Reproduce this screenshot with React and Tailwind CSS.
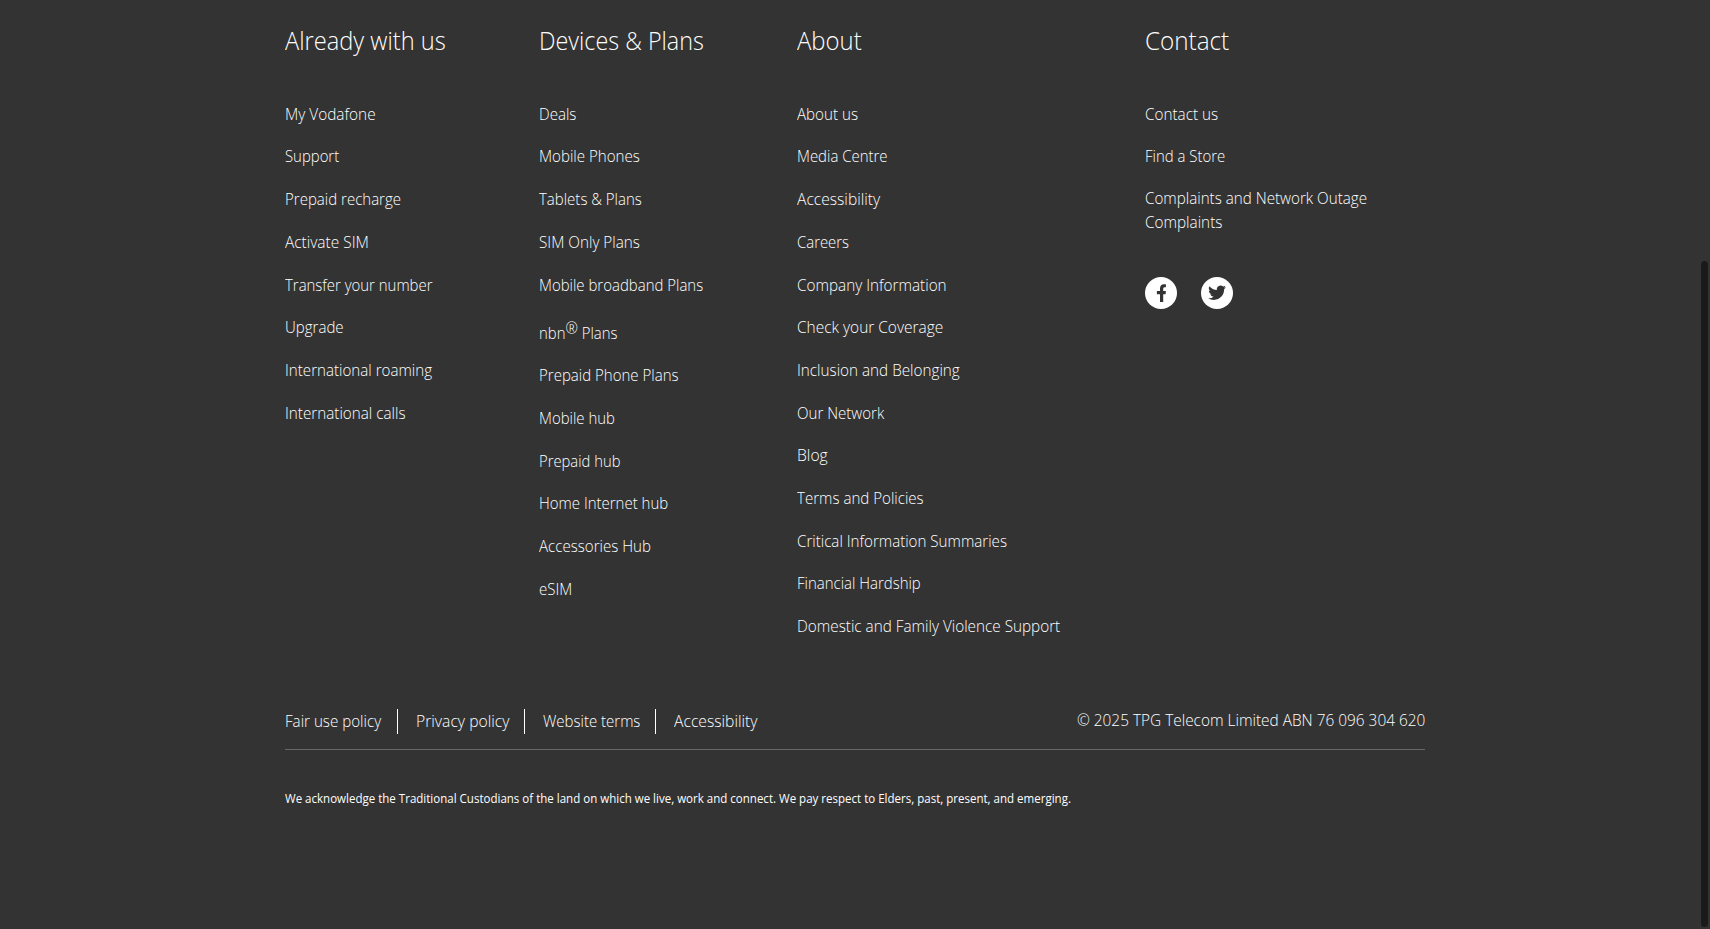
import React, { useLayoutEffect, useRef, useState } from "react";

// Light text condensed horizontally to a given advance width.
function Fit({ w, children }) {
  const ref = useRef(null);
  const [scale, setScale] = useState(0.9);
  useLayoutEffect(() => {
    setScale(w / ref.current.offsetWidth);
  }, [w]);
  return (
    <span className="inline-block whitespace-nowrap" style={{ width: w }}>
      <span ref={ref} className="inline-block origin-left" style={{ transform: `scaleX(${scale})` }}>
        {children}
      </span>
    </span>
  );
}

const nbn = (
  <>
    nbn<sup className="top-[-5px] text-[17px] leading-none">®</sup> Plans
  </>
);

const columns = [
  {
    title: ["Already with us", 161],
    className: "w-[253.6px]",
    links: [
      ["My Vodafone", 90.4], ["Support", 54.3], ["Prepaid recharge", 115.8], ["Activate SIM", 83.6],
      ["Transfer your number", 147.5], ["Upgrade", 58.4], ["International roaming", 147], ["International calls", 121],
    ],
  },
  {
    title: ["Devices & Plans", 165.2],
    className: "w-[258px]",
    links: [
      ["Deals", 37.3], ["Mobile Phones", 100.5], ["Tablets & Plans", 103.2], ["SIM Only Plans", 100.5],
      ["Mobile broadband Plans", 163.7], [nbn, 78.8], ["Prepaid Phone Plans", 139.6], ["Mobile hub", 75.6],
      ["Prepaid hub", 81.8], ["Home Internet hub", 129.5], ["Accessories Hub", 111.9], ["eSIM", 33.6],
    ],
  },
  {
    title: ["About", 64.3],
    className: "w-[348.4px]",
    links: [
      ["About us", 60.6], ["Media Centre", 90.6], ["Accessibility", 83.6], ["Careers", 51.7],
      ["Company Information", 149.2], ["Check your Coverage", 146.2], ["Inclusion and Belonging", 162.4],
      ["Our Network", 86.8], ["Blog", 30.5], ["Terms and Policies", 127], ["Critical Information Summaries", 210],
      ["Financial Hardship", 124.2], ["Domestic and Family Violence Support", 263.4],
    ],
  },
];

function Title({ children, w }) {
  return (
    <h2 className="h-[79.75px] text-[26px] leading-[36px]">
      <Fit w={w}>{children}</Fit>
    </h2>
  );
}

function Row({ children, w, tall }) {
  return (
    <li className={tall ? "h-[48px] pt-[5.5px]" : "h-[42.71px]"}>
      <a className="block h-6">
        <Fit w={w}>{children}</Fit>
      </a>
    </li>
  );
}

function Facebook() {
  return (
    <svg viewBox="0 0 32 32" className="size-8">
      <circle cx="16" cy="16" r="16" fill="#fff" />
      <path fill="#333" d="M15 25V17.2H11.9V14H15V11.6C15 8.6 16.5 7.2 19 7.2H20.9V10.2H19.8C18.6 10.2 18.2 10.8 18.2 11.9V14H20.9L20.6 17.2H18.2V25Z" />
    </svg>
  );
}

function Twitter() {
  return (
    <svg viewBox="0 0 32 32" className="size-8">
      <circle cx="16" cy="16" r="16" fill="#fff" />
      <g transform="translate(7.2 6.8) scale(.74)">
        <path fill="#333" d="M23.95 4.57a10 10 0 0 1-2.82.77 4.96 4.96 0 0 0 2.16-2.72 9.9 9.9 0 0 1-3.12 1.19 4.92 4.92 0 0 0-8.38 4.48A13.93 13.93 0 0 1 1.64 3.16 4.92 4.92 0 0 0 3.16 9.72a4.9 4.9 0 0 1-2.23-.61v.06a4.92 4.92 0 0 0 3.95 4.83 5 5 0 0 1-2.21.08 4.94 4.94 0 0 0 4.6 3.42A9.87 9.87 0 0 1 0 19.54 13.99 13.99 0 0 0 7.55 21.75c9.05 0 14-7.5 14-13.98 0-.21 0-.42-.02-.63a9.94 9.94 0 0 0 2.42-2.57Z" />
      </g>
    </svg>
  );
}

export default function App() {
  return (
    <div className="relative h-[929px] overflow-hidden bg-[#333] font-['Open_Sans',sans-serif] text-[17px] leading-6 font-light text-white">
      <footer className="mx-auto w-[1140px] pt-[22px]">
        <div className="flex h-[684px]">
          {columns.map((c) => (
            <section key={c.title[0]} className={c.className}>
              <Title w={c.title[1]}>{c.title[0]}</Title>
              <ul>
                {c.links.map(([label, w], i) => (
                  <Row key={i} w={w} tall={label === nbn}>{label}</Row>
                ))}
              </ul>
            </section>
          ))}
          <section className="w-[280px]">
            <Title w={84}>Contact</Title>
            <ul>
              <Row w={72.8}>Contact us</Row>
              <li className="h-[41.67px]">
                <a className="block h-6"><Fit w={80}>Find a Store</Fit></a>
              </li>
              <li>
                <a className="block h-12">
                  <Fit w={222.3}>Complaints and Network Outage</Fit>
                  <br />
                  <Fit w={77.4}>Complaints</Fit>
                </a>
              </li>
            </ul>
            <div className="mt-[43px] flex gap-6">
              <Facebook />
              <Twitter />
            </div>
          </section>
        </div>
        <div className="flex h-11 justify-between border-b border-[#666]">
          <nav className="mt-[3px] flex h-[25px] leading-[23px]">
            <a className="w-[113px] border-r border-white"><Fit w={96.3}>Fair use policy</Fit></a>
            <a className="w-[127px] border-r border-white pl-[17.5px]"><Fit w={93.3}>Privacy policy</Fit></a>
            <a className="w-[131px] border-r border-white pl-[18px]"><Fit w={97}>Website terms</Fit></a>
            <a className="pl-[18px]"><Fit w={84}>Accessibility</Fit></a>
          </nav>
          <p className="mt-[2px]"><Fit w={348.5}>© 2025 TPG Telecom Limited ABN 76 096 304 620</Fit></p>
        </div>
        <p className="mt-[39px] text-[12.5px] leading-5 font-normal"><Fit w={785.6}>We acknowledge the Traditional Custodians of the land on which we live, work and connect. We pay respect to Elders, past, present, and emerging.</Fit></p>
      </footer>
      <div className="absolute top-[261px] right-[2px] h-[666px] w-[7px] rounded-full bg-[#1a1a1a]" />
    </div>
  );
}
